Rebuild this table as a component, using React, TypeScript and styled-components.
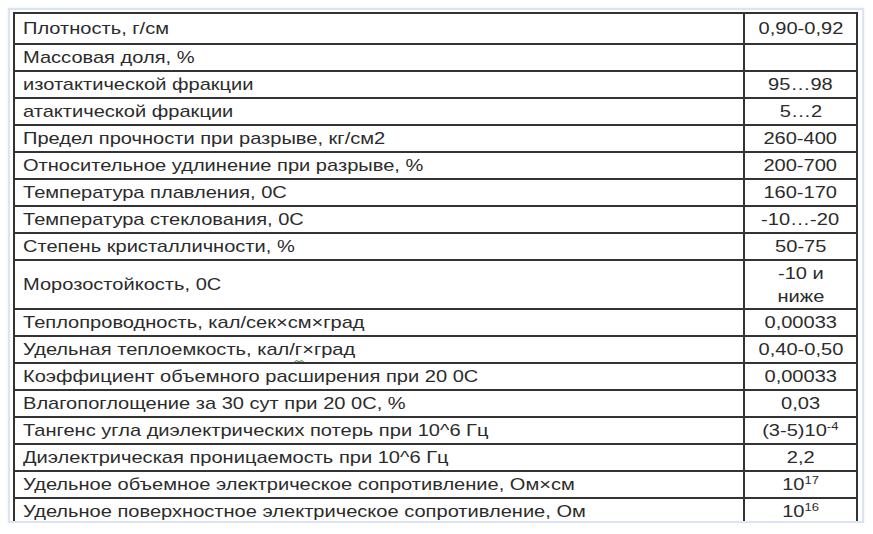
import React from 'react';
import styled, { createGlobalStyle } from 'styled-components';

const GlobalStyle = createGlobalStyle`
    html, body {
        margin: 0;
        padding: 0;
        background: #ffffff;
    }
    body {
        font-family: 'Liberation Sans', Arial, sans-serif;
        color: #2b2b2b;
    }
`;

const Frame = styled.div`
    box-sizing: border-box;
    width: 856px;
    height: 515px;
    margin: 8px 0 0 8px;
    padding: 2px 4px 1px 3px;
    border: 2px solid #dbe4f2;
    box-shadow: 0 0 2px rgba(170, 190, 220, 0.35);
    overflow: hidden;
`;

const Table = styled.div`
    border: 2px solid #333333;
    border-bottom: none;
`;

const Row = styled.div<{ $height: number }>`
    box-sizing: border-box;
    display: grid;
    grid-template-columns: 1fr 113px;
    height: ${(p) => p.$height}px;
    border-bottom: 2px solid #333333;
`;

const NameCell = styled.div`
    display: flex;
    align-items: center;
    padding: 0 0 0 8px;
    font-size: 17px;
    white-space: nowrap;
    overflow: hidden;
`;

const ValueCell = styled.div`
    box-sizing: border-box;
    display: flex;
    align-items: center;
    justify-content: center;
    text-align: center;
    border-left: 2px solid #333333;
    font-size: 17px;
    line-height: 23px;
    white-space: nowrap;
`;

/* the source picture is stretched sideways, so the glyphs are widened to match */
const Stretched = styled.span<{ $origin: 'left' | 'center' }>`
    display: inline-block;
    transform: scaleX(1.18);
    transform-origin: ${(p) => p.$origin} center;
`;

const Sup = styled.sup`
    font-size: 11px;
    vertical-align: 6px;
    line-height: 0;
`;

const Misspelled = styled.span`
    position: relative;
`;

const Squiggle = styled.svg`
    position: absolute;
    left: 0;
    bottom: -4px;
    width: 8px;
    height: 3px;
`;

interface PropertyRow {
    name: React.ReactNode;
    value: React.ReactNode;
    height?: number;
}

const rows: PropertyRow[] = [
    { name: 'Плотность, г/см', value: '0,90-0,92', height: 31 },
    { name: 'Массовая доля, %', value: '' },
    { name: 'изотактической фракции', value: '95…98' },
    { name: 'атактической фракции', value: '5…2' },
    { name: 'Предел прочности при разрыве, кг/см2', value: '260-400' },
    { name: 'Относительное удлинение при разрыве, %', value: '200-700' },
    { name: 'Температура плавления, 0С', value: '160-170' },
    { name: 'Температура стеклования, 0С', value: '-10…-20' },
    { name: 'Степень кристалличности, %', value: '50-75' },
    {
        name: 'Морозостойкость, 0С',
        value: (
            <>
                -10 и
                <br />
                ниже
            </>
        ),
        height: 49,
    },
    { name: 'Теплопроводность, кал/сек×см×град', value: '0,00033' },
    {
        name: (
            <>
                Удельная теплоемкость, кал/
                <Misspelled>
                    г
                    <Squiggle viewBox="0 0 8 3">
                        <path d="M0 2 L2 0.5 L4 2 L6 0.5 L8 2" fill="none" stroke="#5aa84a" strokeWidth="1" />
                    </Squiggle>
                </Misspelled>
                ×град
            </>
        ),
        value: '0,40-0,50',
    },
    { name: 'Коэффициент объемного расширения при 20 0С', value: '0,00033' },
    { name: 'Влагопоглощение за 30 сут при 20 0С, %', value: '0,03' },
    {
        name: 'Тангенс угла диэлектрических потерь при 10^6 Гц',
        value: (
            <>
                (3-5)10<Sup>-4</Sup>
            </>
        ),
    },
    { name: 'Диэлектрическая проницаемость при 10^6 Гц', value: '2,2' },
    {
        name: 'Удельное объемное электрическое сопротивление, Ом×см',
        value: (
            <>
                10<Sup>17</Sup>
            </>
        ),
    },
    {
        name: 'Удельное поверхностное электрическое сопротивление, Ом',
        value: (
            <>
                10<Sup>16</Sup>
            </>
        ),
    },
];

export default function App() {
    return (
        <>
            <GlobalStyle />
            <Frame>
                <Table>
                    {rows.map((row, i) => (
                        <Row key={i} $height={row.height ?? 27}>
                            <NameCell>
                                <Stretched $origin="left">{row.name}</Stretched>
                            </NameCell>
                            <ValueCell>
                                <Stretched $origin="center">{row.value}</Stretched>
                            </ValueCell>
                        </Row>
                    ))}
                </Table>
            </Frame>
        </>
    );
}
